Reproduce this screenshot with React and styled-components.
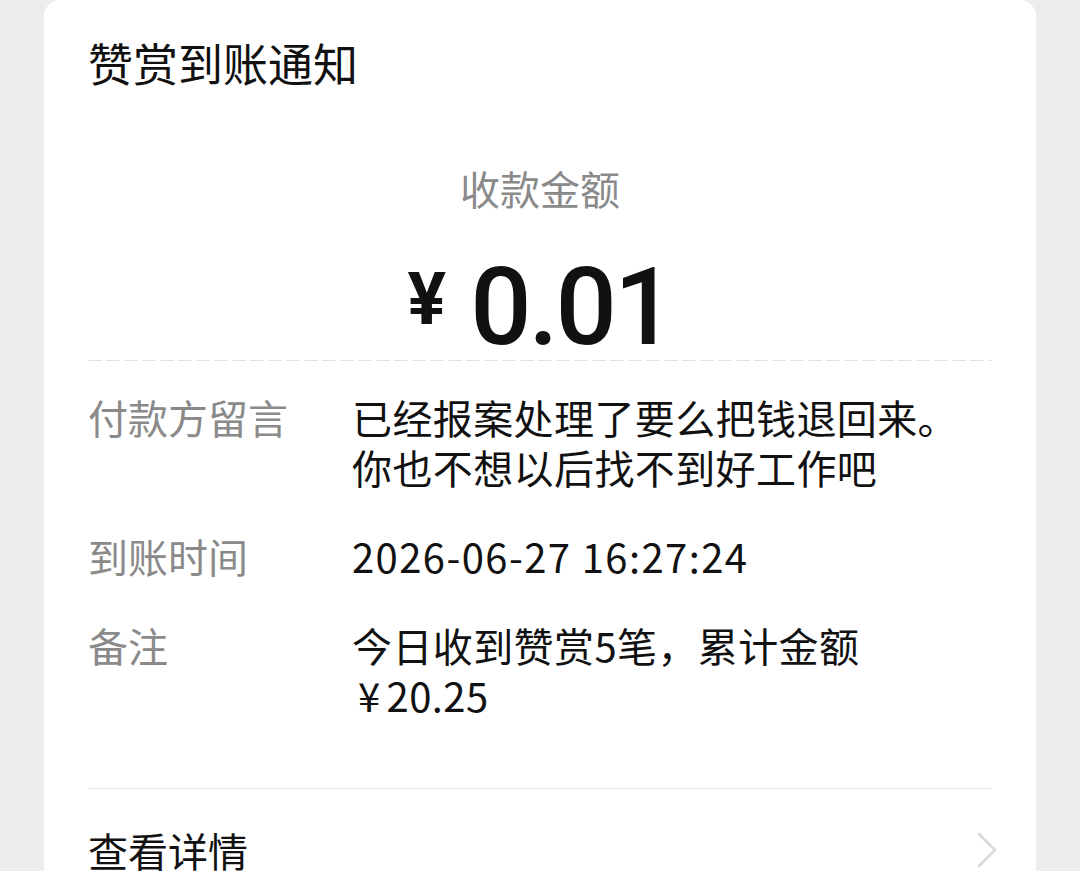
import styled, { createGlobalStyle } from 'styled-components';

const GlobalStyle = createGlobalStyle`
  html, body {
    margin: 0;
    padding: 0;
    background: #ededed;
    overflow: hidden;
  }
  body {
    font-family: "Noto Sans CJK SC", "Noto Sans", sans-serif;
    -webkit-font-smoothing: antialiased;
  }
`;

const Page = styled.div`
  height: 100vh;
  padding: 0 44px;
  box-sizing: border-box;
  overflow: hidden;
`;

const Card = styled.div`
  background: #fff;
  border-radius: 16px 16px 0 0;
  padding: 33px 44px 0;
  height: 920px;
  box-sizing: border-box;
`;

const Title = styled.h1`
  margin: 0;
  font-size: 45px;
  line-height: 60px;
  font-weight: 400;
  color: #111;
`;

const AmountLabel = styled.div`
  margin-top: 67px;
  text-align: center;
  font-size: 40px;
  line-height: 56px;
  color: #8a8a8a;
`;

const AmountRow = styled.div`
  display: flex;
  justify-content: center;
  align-items: flex-start;
  margin-top: 41px;
  height: 103px;
`;

const Yen = styled.span`
  font-family: Roboto, "Liberation Sans", sans-serif;
  font-weight: 700;
  font-size: 72px;
  line-height: 72px;
  margin-top: 7px;
  margin-right: 24px;
  color: #111;
`;

const Amount = styled.span`
  font-family: Roboto, "Liberation Sans", sans-serif;
  font-weight: 500;
  font-size: 108px;
  line-height: 100px;
  letter-spacing: -3px;
  color: #111;
`;

const Dashed = styled.div`
  height: 1px;
  background-image: repeating-linear-gradient(
    to right,
    #e2e2e2 0 14px,
    transparent 14px 18px
  );
`;

const Details = styled.div`
  margin-top: 31px;
  display: grid;
  grid-template-columns: 264px 1fr;
  row-gap: 39px;
  font-size: 40px;
  line-height: 50px;
`;

const Label = styled.div`
  color: #8a8a8a;
`;

const Value = styled.div`
  color: #111;
  letter-spacing: ${(p) => (p.$numeric ? '1.4px' : '0.4px')};
`;

const Yuan = styled.span`
  margin: 0 6px 0 6px;
`;

const Divider = styled.div`
  height: 1px;
  background: #e8e8e8;
  margin-top: 68px;
`;

const LinkRow = styled.div`
  display: flex;
  justify-content: space-between;
  align-items: center;
  margin-top: 36px;
  font-size: 40px;
  line-height: 50px;
  color: #111;

  svg {
    margin-right: -6px;
  }
`;

const Chevron = () => (
  <svg width="22" height="38" viewBox="0 0 22 38" fill="none">
    <path d="M3 3 L19 19 L3 35" stroke="#d9d9d9" strokeWidth="2.5" strokeLinecap="round" strokeLinejoin="round" />
  </svg>
);

export default function App() {
  return (
    <Page>
      <GlobalStyle />
      <Card>
        <Title>赞赏到账通知</Title>
        <AmountLabel>收款金额</AmountLabel>
        <AmountRow>
          <Yen>¥</Yen>
          <Amount>0.01</Amount>
        </AmountRow>
        <Dashed />
        <Details>
          <Label>付款方留言</Label>
          <Value>
            已经报案处理了要么把钱退回来。
            <br />
            你也不想以后找不到好工作吧
          </Value>
          <Label>到账时间</Label>
          <Value $numeric>2026-06-27 16:27:24</Value>
          <Label>备注</Label>
          <Value>
            今日收到赞赏5笔，累计金额
            <br />
            <Yuan>¥</Yuan>20.25
          </Value>
        </Details>
        <Divider />
        <LinkRow>
          <span>查看详情</span>
          <Chevron />
        </LinkRow>
      </Card>
    </Page>
  );
}
